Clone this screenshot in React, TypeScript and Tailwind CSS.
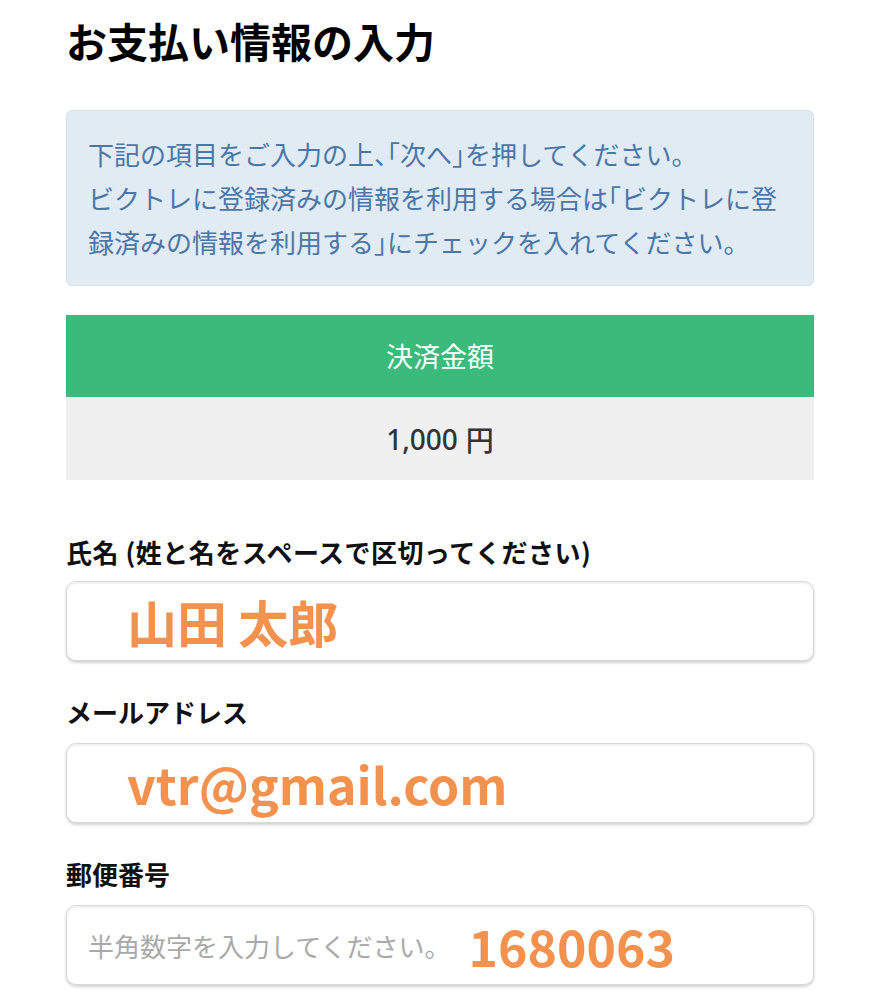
import React from "react";

const jp = "font-['Noto_Sans_CJK_JP',sans-serif]";

function Label({ children }: { children: React.ReactNode }) {
  return (
    <div className={`${jp} text-[26px] leading-[36px] font-bold text-[#111]`}>
      {children}
    </div>
  );
}

function Field({ children, className = "" }: { children: React.ReactNode; className?: string }) {
  return (
    <div
      className={`h-[80px] rounded-[10px] border border-[#d9d9d9] bg-white shadow-[inset_0_2px_2px_rgba(0,0,0,0.06),0_2px_3px_rgba(0,0,0,0.18)] flex items-center ${className}`}
    >
      {children}
    </div>
  );
}

export default function App() {
  return (
    <div className={`w-[880px] h-[1000px] bg-white px-[66px] ${jp}`}>
      <h1 className="pt-[14px] text-[41px] leading-[52px] font-bold text-black">
        お支払い情報の入力
      </h1>

      {/* halt = half-width brackets, like the phone font */}
      <div className="mt-[44px] rounded-[6px] border border-[#d3e1ec] bg-[#e0ebf3] px-[21px] py-[21px] text-[26px] leading-[44px] text-[#4a77a7] [font-feature-settings:'halt']">
        <p>下記の項目をご入力の上、「次へ」を押してください。</p>
        <p>ビクトレに登録済みの情報を利用する場合は「ビクトレに登録済みの情報を利用する」にチェックを入れてください。</p>
      </div>

      <div className="mt-[29px]">
        <div className="h-[82px] bg-[#3abb7b] flex items-center justify-center text-white text-[27px]">
          決済金額
        </div>
        <div className="h-[83px] bg-[#f0f0f0] flex items-center justify-center text-[#333] text-[28px] font-medium">
          <span className="font-['Noto_Sans',sans-serif]">1,000</span>
          <span className="ml-[8px]">円</span>
        </div>
      </div>

      <div className="mt-[54px]">
        <Label>
          <span className="tracking-[0.5px]">氏名 (姓と名をスペースで区切ってください)</span>
        </Label>
      </div>
      <Field className="mt-[11px] pl-[60px]">
        <span className="text-[50px] font-bold text-[#f3914e]">山田 太郎</span>
      </Field>

      <div className="mt-[33px]">
        <Label>メールアドレス</Label>
      </div>
      <Field className="mt-[13px] pl-[60px]">
        <span className="text-[50px] font-bold text-[#f3914e]">vtr@gmail.com</span>
      </Field>

      <div className="mt-[33px]">
        <Label>郵便番号</Label>
      </div>
      <Field className="mt-[13px] pl-[21px]">
        <span className="text-[26px] text-[#a9a9a9]">半角数字を入力してください。</span>
        <span className="ml-[18px] text-[50px] font-bold text-[#f3914e]">1680063</span>
      </Field>
    </div>
  );
}
